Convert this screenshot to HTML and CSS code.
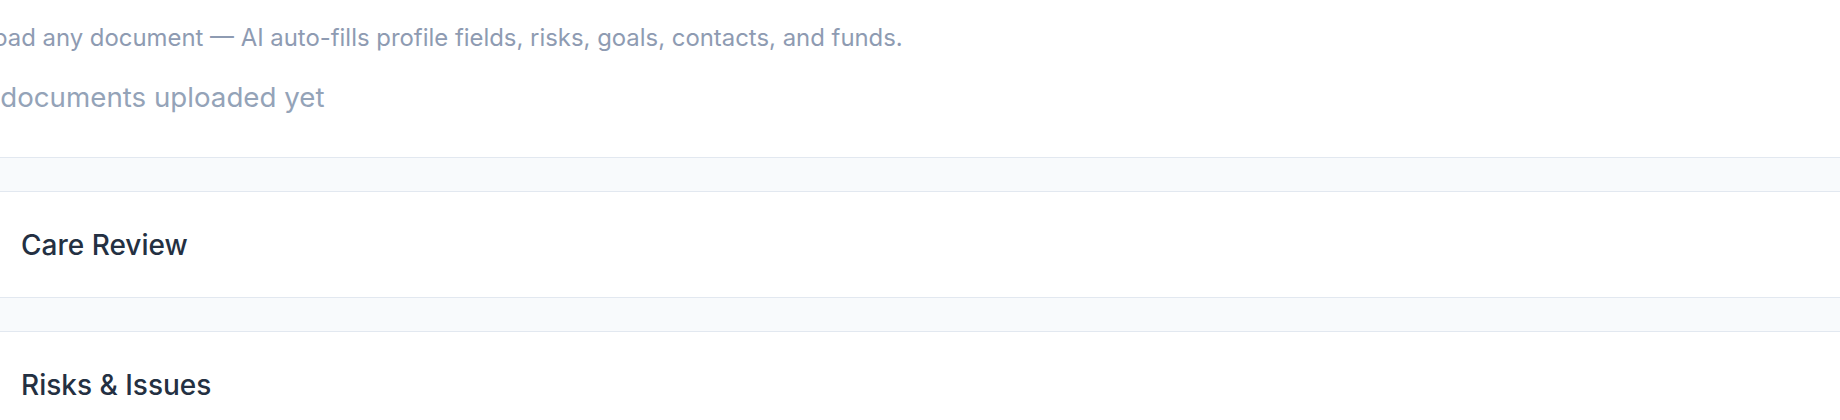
FILE: index.html
```html
<!DOCTYPE html>
<html lang="en">
<head>
<meta charset="utf-8">
<title>Client profile</title>
<link rel="stylesheet" href="styles.css">
</head>
<body>
  <div class="page">
    <section class="upload-panel">
      <div class="upload-inner">
        <p class="upload-hint">Upload any document — AI auto-fills profile fields, risks, goals, contacts, and funds.</p>
        <p class="upload-empty">No documents uploaded yet</p>
      </div>
    </section>
    <section class="card">
      <h2 class="card-title">Care Review</h2>
    </section>
    <section class="card">
      <h2 class="card-title">Risks &amp; Issues</h2>
    </section>
  </div>
</body>
</html>
```
FILE: styles.css
```css
html, body {
  margin: 0;
  padding: 0;
  background: #ffffff;
  overflow: hidden;
}

body {
  font-family: Inter, "Noto Sans", "Liberation Sans", sans-serif;
  color: #1e293b;
}

.page {
  display: flex;
  flex-direction: column;
  gap: 33px;
  background: #f8fafc;
  min-height: 420px;
}

.upload-panel {
  background: #ffffff;
  border-bottom: 1px solid #e2e8f0;
  padding: 22px 0 42px;
}

.upload-inner {
  margin-left: -45px;
  white-space: nowrap;
}

.upload-hint {
  margin: 0;
  font-size: 23.9px;
  line-height: 32px;
  color: #8e9bb2;
}

.upload-empty {
  margin: 25px 0 0;
  font-size: 27.7px;
  line-height: 36px;
  color: #94a3b8;
}

.card {
  background: #ffffff;
  border-top: 1px solid #e2e8f0;
  border-bottom: 1px solid #e2e8f0;
  height: 105px;
  display: flex;
  align-items: center;
  padding-left: 21px;
}

.card-title {
  margin: 0;
  font-size: 28px;
  font-weight: 500;
  color: #243042;
}
```
